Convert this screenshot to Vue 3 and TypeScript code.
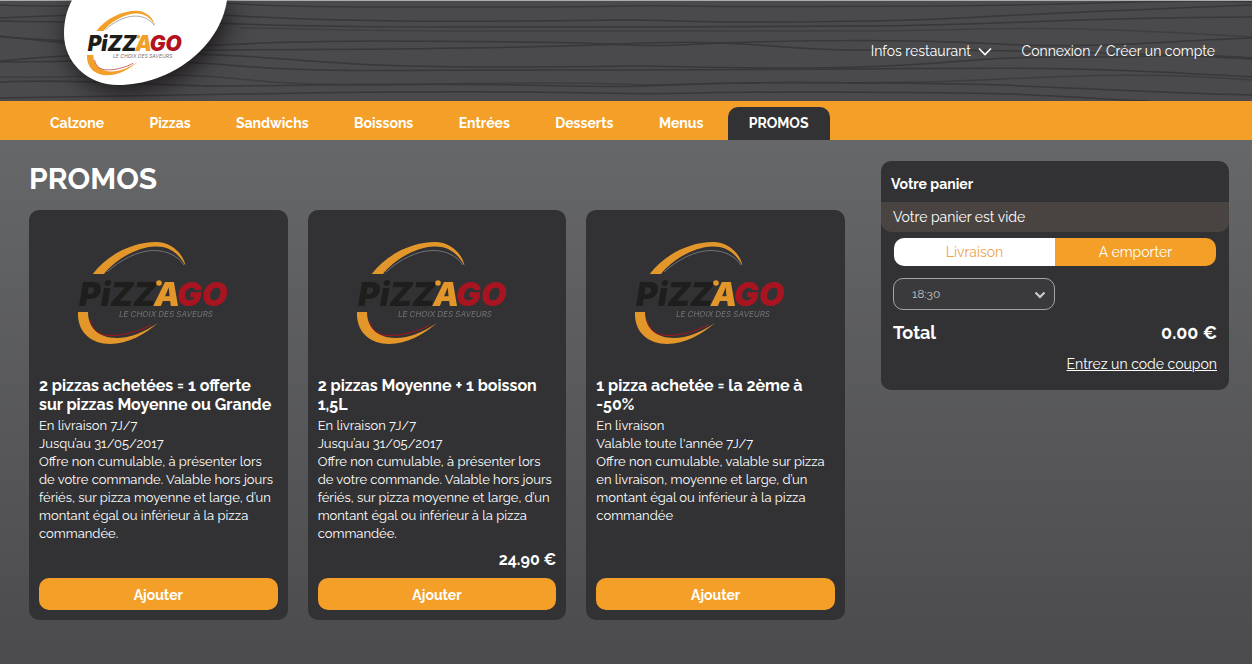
<script setup lang="ts">
import { ref } from 'vue'

interface Promo {
  title: string
  lines: string[]
  price?: string
}

const categories: string[] = [
  'Calzone', 'Pizzas', 'Sandwichs', 'Boissons', 'Entrées', 'Desserts', 'Menus', 'PROMOS',
]
const active = ref('PROMOS')
const mode = ref<'livraison' | 'emporter'>('emporter')
const hour = ref('18:30')

const promos: Promo[] = [
  {
    title: '2 pizzas achetées = 1 offerte sur pizzas Moyenne ou Grande',
    lines: [
      'En livraison 7J/7',
      'Jusqu’au 31/05/2017',
      'Offre non cumulable, à présenter lors de votre commande. Valable hors jours fériés, sur pizza moyenne et large, d’un montant égal ou inférieur à la pizza commandée.',
    ],
  },
  {
    title: '2 pizzas Moyenne + 1 boisson 1,5L',
    lines: [
      'En livraison 7J/7',
      'Jusqu’au 31/05/2017',
      'Offre non cumulable, à présenter lors de votre commande. Valable hors jours fériés, sur pizza moyenne et large, d’un montant égal ou inférieur à la pizza commandée.',
    ],
    price: '24.90 €',
  },
  {
    title: '1 pizza achetée = la 2ème à -50%',
    lines: [
      'En livraison',
      "Valable toute l'année 7J/7",
      'Offre non cumulable, valable sur pizza en livraison, moyenne et large, d’un montant égal ou inférieur à la pizza commandée',
    ],
  },
]
</script>

<template>
  <div class="page">
    <header class="header">
      <svg class="wood" viewBox="0 0 1252 100" preserveAspectRatio="none" aria-hidden="true">
        <g fill="none" stroke="#38383b" stroke-width="1.500">
          <path d="M0 4C90 8 170 -1 240 3S400 6 520 6 620 4 680 5 980 6 1100 2 1252 1 1252 1" />
          <path d="M0 17C60 14 160 10 240 15S400 21 520 20 620 18 680 20 900 21 980 16 1160 8 1252 4" />
          <path d="M0 20C80 22 160 20 240 23S400 26 520 26 700 26 860 25 1040 17 1252 16" />
          <path opacity=".6" d="M240 27C300 27 350 31 520 30S700 31 860 30 1020 22 1252 36" />
          <path d="M0 36C70 40 170 47 240 43S400 40 520 41 620 47 700 43 900 38 1000 43 1160 40 1252 37" />
          <path d="M0 35C80 45 170 50 240 49S480 49 620 43 760 49 860 49 1080 49 1252 58" />
          <path d="M0 60C80 52 160 50 240 55S360 66 480 66 600 65 640 65 760 69 860 66 980 55 1080 56 1160 51 1252 57" />
          <path d="M0 61C80 60 160 58 240 65S400 69 520 69 700 69 860 68 1060 65 1252 76" />
          <path opacity=".7" d="M0 76C90 78 160 69 240 78S400 83 520 82 620 86 700 83 820 83 920 81 1120 68 1252 79" />
          <path d="M0 81C80 77 160 86 240 85S400 82 520 84 620 86 700 83 880 82 960 83 1140 92 1252 94" />
          <path d="M0 97C80 96 160 94 240 93S400 90 520 91 620 94 700 92 860 91 960 92 1080 98 1150 100" />
        </g>
      </svg>
      <a class="brand" href="#" aria-label="Pizz'Ago">
        <svg width="212" height="100" viewBox="50 1 212 100" aria-hidden="true">
          <path class="blob" d="M72 0C66 12 64 22 64 34 64 62 87 85 118 85 170 85 220 48 227 0Z" />
          <svg x="87" y="10" width="95" height="66" viewBox="0 0 150 104" overflow="visible">
            <g id="pizzago">
              <path fill="#f2a02a" d="M14.700 33C30 13 55 1 78 1c15 0 27 11 29.500 23.700C100 11 90 5 77 5.500 58 6 36 20 26 33Z" />
              <path fill="none" stroke="#77787b" d="M29 31C42 19 60 9.500 76 9.500c14 0 24 6 30 14.500" />
              <path fill="#f2a02a" d="M0 71C-1 90 12 103 32 103c18 0 35-10 48-21-14 9-28 15-41 15C20 97 10 86 10 71Z" />
              <path fill="none" stroke="#b3131f" d="M12 79c2 10 9 15.500 20 15.500 14 0 29-4 41-10.500" />
              <text class="mark" x="1" y="65"><tspan fill="#1d1d1b">PiZZ</tspan><tspan fill="#f2a02a" x="76">A</tspan><tspan fill="#b3131f" x="99">GO</tspan></text>
              <circle fill="#f2a02a" cx="81" cy="42" r="2.800" />
              <text class="tag" x="41" y="76">LE CHOIX DES SAVEURS</text>
            </g>
          </svg>
        </svg>
      </a>
      <nav class="account">
        <a href="#">Infos restaurant
          <svg width="14" height="9" viewBox="0 0 14 9" aria-hidden="true">
            <path d="M1 1.500 7 7.500 13 1.500" fill="none" stroke="#fff" stroke-width="1.600" />
          </svg>
        </a>
        <a href="#">Connexion / Créer un compte</a>
      </nav>
    </header>

    <nav class="tabs">
      <template v-for="c in categories" :key="c">
        <a href="#" :class="{ on: c === active }" @click.prevent="active = c">{{ c }}</a>{{ ' ' }}
      </template>
    </nav>

    <main class="content">
      <section>
        <h1>PROMOS</h1>
        <div class="cards">
          <article v-for="p in promos" :key="p.title" class="card">
            <svg class="picture" width="150" height="104" viewBox="0 0 150 104" aria-hidden="true"><use href="#pizzago" /></svg>
            <h2>{{ p.title }}</h2>
            <p v-for="l in p.lines" :key="l">{{ l }}</p>
            <div class="foot">
              <strong v-if="p.price">{{ p.price }}</strong>
              <button type="button">Ajouter</button>
            </div>
          </article>
        </div>
      </section>

      <aside class="cart">
        <h3>Votre panier</h3>
        <p class="empty">Votre panier est vide</p>
        <div class="body">
          <div class="modes">
            <button type="button" :class="{ on: mode === 'livraison' }" @click="mode = 'livraison'">Livraison</button>
            <button type="button" :class="{ on: mode === 'emporter' }" @click="mode = 'emporter'">A emporter</button>
          </div>
          <div class="time">
            <select v-model="hour" aria-label="Heure">
              <option>18:30</option>
              <option>18:45</option>
              <option>19:00</option>
            </select>
            <svg width="12" height="8" viewBox="0 0 12 8" aria-hidden="true">
              <path d="M1.500 1.500 6 6 10.500 1.500" fill="none" stroke="#ccc" stroke-width="2.200" />
            </svg>
          </div>
          <div class="total"><span>Total</span><span>0.00 €</span></div>
          <a class="coupon" href="#">Entrez un code coupon</a>
        </div>
      </aside>
    </main>
  </div>
</template>

<style>
body {
  margin: 0;
  background: #4b4b4d;
}
</style>

<style scoped>
.page {
  min-height: 100vh;
  display: flex;
  flex-direction: column;
  color: #fff;
  font-family: Raleway, Lato, sans-serif;
}
.page *,
.page {
  box-sizing: border-box;
}
a {
  color: inherit;
  text-decoration: none;
}
button {
  border: 0;
  padding: 0;
  font-family: inherit;
  cursor: pointer;
}
.mark {
  font-family: Inter, sans-serif;
  font-size: 33px;
  font-weight: 900;
  font-style: italic;
}
.tag {
  font-family: Inter, sans-serif;
  font-size: 8px;
  font-style: italic;
  fill: #77787b;
}
.header {
  position: relative;
  display: flex;
  justify-content: space-between;
  border-top: 1px solid #a9abad;
  background: #4a4a4d;
}
.wood {
  position: absolute;
  inset: 0;
  width: 100%;
  height: 100%;
}
.brand {
  position: relative;
  margin-left: 50px;
}
.brand > svg {
  display: block;
  overflow: visible;
}
.blob {
  fill: #fff;
  filter: drop-shadow(4px 5px 14px rgba(15, 10, 12, 0.9));
}
.account {
  position: relative;
  display: flex;
  align-items: center;
  gap: 30px;
  padding-right: 37px;
  font-size: 14px;
}
.account svg {
  margin-left: 3px;
}
.tabs {
  position: relative;
  padding: 6px 0 0 29px;
  background: #f49f28;
  font-size: 14px;
  font-weight: 700;
  line-height: 33px;
}
.tabs a {
  display: inline-block;
  padding: 0 21px;
  border-radius: 10px 10px 0 0;
  vertical-align: top;
}
.tabs .on {
  background: #323234;
}
.content {
  position: relative;
  flex: 1;
  display: grid;
  grid-template-columns: 1fr 348px;
  gap: 36px;
  align-items: start;
  padding: 21px 23px 44px 29px;
  background: linear-gradient(#666769, #4b4b4d);
}
h1 {
  margin: 0 0 14px;
  font-size: 30px;
  line-height: 35px;
}
.cards {
  display: grid;
  grid-template-columns: repeat(3, 1fr);
  gap: 20px;
}
.card {
  display: flex;
  flex-direction: column;
  min-height: 410px;
  padding: 31px 10px 10px;
  border-radius: 10px;
  background: #323234;
}
.picture {
  display: block;
  margin: 0 auto 31px 39px;
  opacity: 0.92;
}
h2 {
  margin: 0 0 3px;
  font-size: 16px;
  line-height: 19px;
}
.card p {
  margin: 0;
  font-size: 13px;
  line-height: 18px;
}
.foot {
  display: flex;
  flex-direction: column;
  margin-top: auto;
}
.foot strong {
  margin-bottom: 8px;
  text-align: right;
  font-size: 16px;
  line-height: 20px;
}
.foot button {
  height: 32px;
  padding-top: 2px;
  border-radius: 10px;
  background: #f49f28;
  color: #fff;
  font-size: 14px;
  font-weight: 700;
}
.cart {
  border-radius: 10px;
  background: #323234;
}
h3 {
  margin: 0;
  padding: 14px 10px 9px;
  font-size: 14px;
  line-height: 18px;
}
.empty {
  margin: 0;
  padding: 0 12px;
  border-radius: 0 0 10px 10px;
  background: #494442;
  font-size: 14px;
  line-height: 30px;
}
.body {
  display: flex;
  flex-direction: column;
  padding: 6px 12px 16px;
}
.modes {
  display: grid;
  grid-template-columns: 1fr 1fr;
  overflow: hidden;
  margin: 0 1px;
  border-radius: 10px;
}
.modes button {
  height: 28px;
  background: #fff;
  color: #f0a24a;
  font-size: 14px;
}
.modes .on {
  background: #f49f28;
  color: #fff;
}
.time {
  position: relative;
  width: 50%;
  margin-top: 12px;
}
.time select {
  display: block;
  width: 100%;
  height: 32px;
  padding: 0 18px;
  border: 1px solid #a5a5a7;
  border-radius: 10px;
  appearance: none;
  background: #3a3a3c;
  color: #c4c4c4;
  font-family: inherit;
  font-size: 12px;
}
.time svg {
  position: absolute;
  right: 9px;
  top: 13px;
  pointer-events: none;
}
.total {
  display: flex;
  justify-content: space-between;
  margin-top: 12px;
  font-size: 18px;
  font-weight: 700;
  line-height: 22px;
}
.coupon {
  align-self: flex-end;
  margin-top: 10px;
  font-size: 14px;
  line-height: 20px;
  text-decoration: underline;
}
</style>
